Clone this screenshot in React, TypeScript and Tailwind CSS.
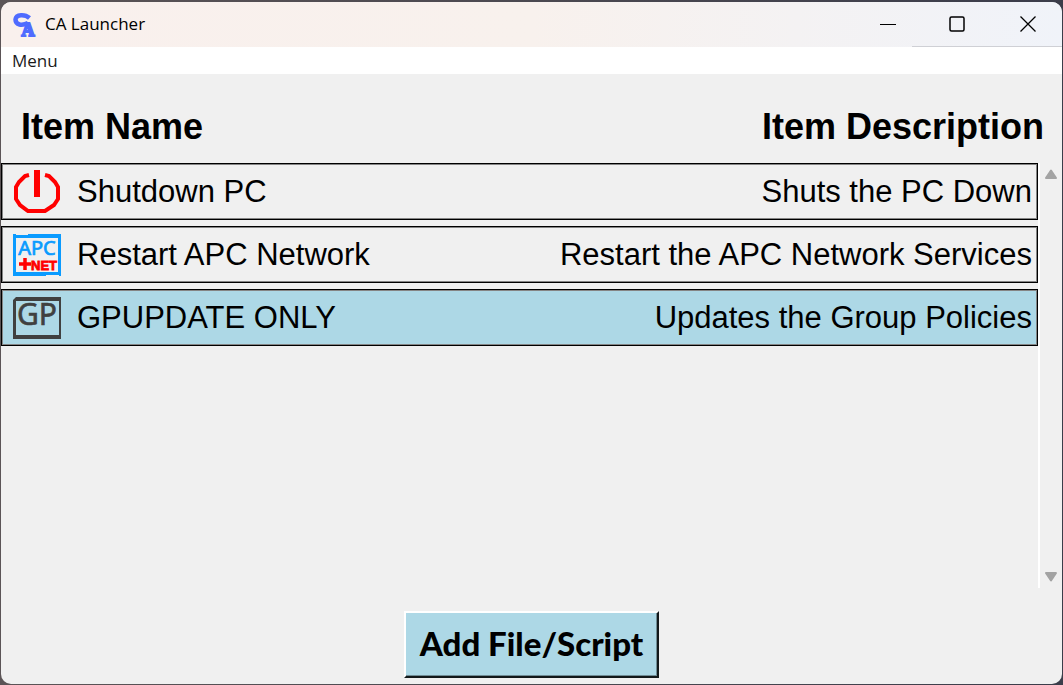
import React, { useState } from 'react';

interface LauncherItem {
  id: string;
  name: string;
  description: string;
  icon: React.ReactNode;
}

const LogoIcon = () => (
  <svg viewBox="0 0 24 24" className="w-6 h-6 shrink-0 overflow-visible" aria-hidden="true">
    <text x="15" y="23" textAnchor="middle" fontSize="18" fontFamily="Liberation Serif, serif" fontWeight="700" fill="#4f6bff" stroke="#4f6bff" strokeWidth="2">A</text>
    <path d="M16.500 5 C12 1 3 1 2.500 6.500 C2.500 12 9 13 15 10" fill="none" stroke="#4f6bff" strokeWidth="4.500" />
  </svg>
);

const PowerIcon = () => (
  <svg viewBox="0 0 48 48" className="w-12 h-12 shrink-0" aria-hidden="true">
    <path
      d="M16 7 L12 8 L6 14 L3 19 V31 L7 37 L15 43 H32 L41 37 L45 31 V19 L42 14 L36 8 L32 7"
      fill="none"
      stroke="#ff0000"
      strokeWidth="4"
    />
    <path d="M24 2 V29" stroke="#ff0000" strokeWidth="6" />
  </svg>
);

const NetworkIcon = () => (
  <svg viewBox="0 0 48 48" className="w-12 h-12 shrink-0" aria-hidden="true">
    <path d="M0 3 H3 V4 H15 V3 H48 V45 H46 V44 H33 V45 H0 Z M3 7 V41 H45 V7 Z" fill="#0a9bff" fillRule="evenodd" />
    <text x="24" y="24" textAnchor="middle" fontSize="20" fontFamily="Noto Sans, sans-serif" fill="#0a9bff" stroke="#0a9bff" strokeWidth="0.7">APC</text>
    <path d="M6 33 H18 M12 27 V39" stroke="#ff0000" strokeWidth="3.500" />
    <text x="31" y="39" textAnchor="middle" fontSize="13" fontFamily="Liberation Sans, sans-serif" fontWeight="700" fill="#ff0000" stroke="#ff0000" strokeWidth="0.8">NET</text>
  </svg>
);

const PolicyIcon = () => (
  <svg viewBox="0 0 48 48" className="w-12 h-12 shrink-0" aria-hidden="true">
    <path d="M3 3 H48 V45 H0 V6 Z M3 7 V41 H46 V7 Z" fill="#404040" fillRule="evenodd" />
    <text x="24" y="31" textAnchor="middle" fontSize="30" fontFamily="Noto Sans, sans-serif" fill="#404040" stroke="#404040" strokeWidth="0.6">GP</text>
  </svg>
);

const ITEMS: LauncherItem[] = [
  { id: 'shutdown', name: 'Shutdown PC', description: 'Shuts the PC Down', icon: <PowerIcon /> },
  { id: 'apc', name: 'Restart APC Network', description: 'Restart the APC Network Services', icon: <NetworkIcon /> },
  { id: 'gpupdate', name: 'GPUPDATE ONLY', description: 'Updates the Group Policies', icon: <PolicyIcon /> },
];

const TitleBar = () => (
  <header className="flex h-[45px] items-center bg-gradient-to-r from-[#f9f0ed] via-[#f8f1ed] to-[#f0f3f9] pl-3">
    <LogoIcon />
    <h1 className="ml-2 flex-1 pb-0.5 text-[17px] leading-6 text-black">CA Launcher</h1>
    <div className="flex h-full">
      <button type="button" aria-label="Minimize" className="flex w-12 items-center justify-center">
        <svg viewBox="0 0 16 16" className="h-4 w-4"><path d="M0 7.500 H16" stroke="#000" /></svg>
      </button>
      <div className="flex border-b border-[#cfd0d5]">
        <button type="button" aria-label="Maximize" className="flex w-[90px] items-center justify-center">
          <svg viewBox="0 0 16 16" className="h-4 w-4"><rect x="1" y="1" width="14" height="14" rx="1.500" fill="none" stroke="#000" strokeWidth="1.500" /></svg>
        </button>
        <button type="button" aria-label="Close" className="flex w-[60px] items-center justify-center pr-2">
          <svg viewBox="0 0 16 16" className="h-4 w-4"><path d="M0.500 0.500 L15.500 15.500 M15.500 0.500 L0.500 15.500" stroke="#000" strokeWidth="1.300" /></svg>
        </button>
      </div>
    </div>
  </header>
);

const App = () => {
  const [selected, setSelected] = useState('gpupdate');

  return (
    <div className="flex min-h-screen flex-col bg-gradient-to-r from-[#5b5456] to-[#3b3d4a] px-px pt-0.5 pb-px">
      <div className="flex flex-1 flex-col overflow-hidden rounded-[10px] bg-[#f0f0f0] font-['Open_Sans',sans-serif]">
        <TitleBar />

        <nav className="flex h-[27px] items-center bg-white px-[11px]">
          <button type="button" className="text-[17px] leading-6 text-[#1a1a1a]">Menu</button>
        </nav>

        <main className="flex flex-1 flex-col font-['Liberation_Sans',Arial,sans-serif] text-black">
          <div className="flex justify-between pt-[29px] pr-[18px] pb-3 pl-5 text-[36px] leading-[48px] font-bold">
            <h2>Item Name</h2>
            <h2>Item Description</h2>
          </div>

          <div className="flex flex-1">
            <ul className="flex flex-1 flex-col gap-1.5 border-r-2 border-white">
              {ITEMS.map((item) => (
                <li key={item.id}>
                  <button
                    type="button"
                    onClick={() => setSelected(item.id)}
                    className={`flex h-[57px] w-full items-center border border-black pr-[5px] pl-[11px] text-[31px] leading-10 shadow-[inset_0_0_0_1px_#858585] ${
                      selected === item.id ? 'bg-[#add8e6]' : 'bg-[#f0f0f0]'
                    }`}
                  >
                    {item.icon}
                    <span className="ml-4">{item.name}</span>
                    <span className="ml-auto">{item.description}</span>
                  </button>
                </li>
              ))}
            </ul>
            <div className="flex w-[22px] flex-col items-center justify-between py-1.5">
              <button type="button" aria-label="Scroll up">
                <svg viewBox="0 0 14 10" className="h-2.5 w-3.5"><path d="M7 1.500 L12 9 H2 Z" fill="#a3a3a3" stroke="#a3a3a3" strokeWidth="2" strokeLinejoin="round" /></svg>
              </button>
              <button type="button" aria-label="Scroll down">
                <svg viewBox="0 0 14 10" className="h-2.5 w-3.5"><path d="M7 8.500 L12 1 H2 Z" fill="#a3a3a3" stroke="#a3a3a3" strokeWidth="2" strokeLinejoin="round" /></svg>
              </button>
            </div>
          </div>

          <div className="flex justify-center pt-[23px] pb-1.5">
            <button
              type="button"
              className="h-[67px] border-2 border-t-white border-r-[#12181a] border-b-[#12181a] border-l-white bg-[#add8e6] px-3.5 pb-1 font-['Lato',sans-serif] text-[33px] leading-10 font-black shadow-[inset_-1px_-1px_0_#6f8c95]"
            >
              Add File/Script
            </button>
          </div>
        </main>
      </div>
    </div>
  );
};

export default App;
